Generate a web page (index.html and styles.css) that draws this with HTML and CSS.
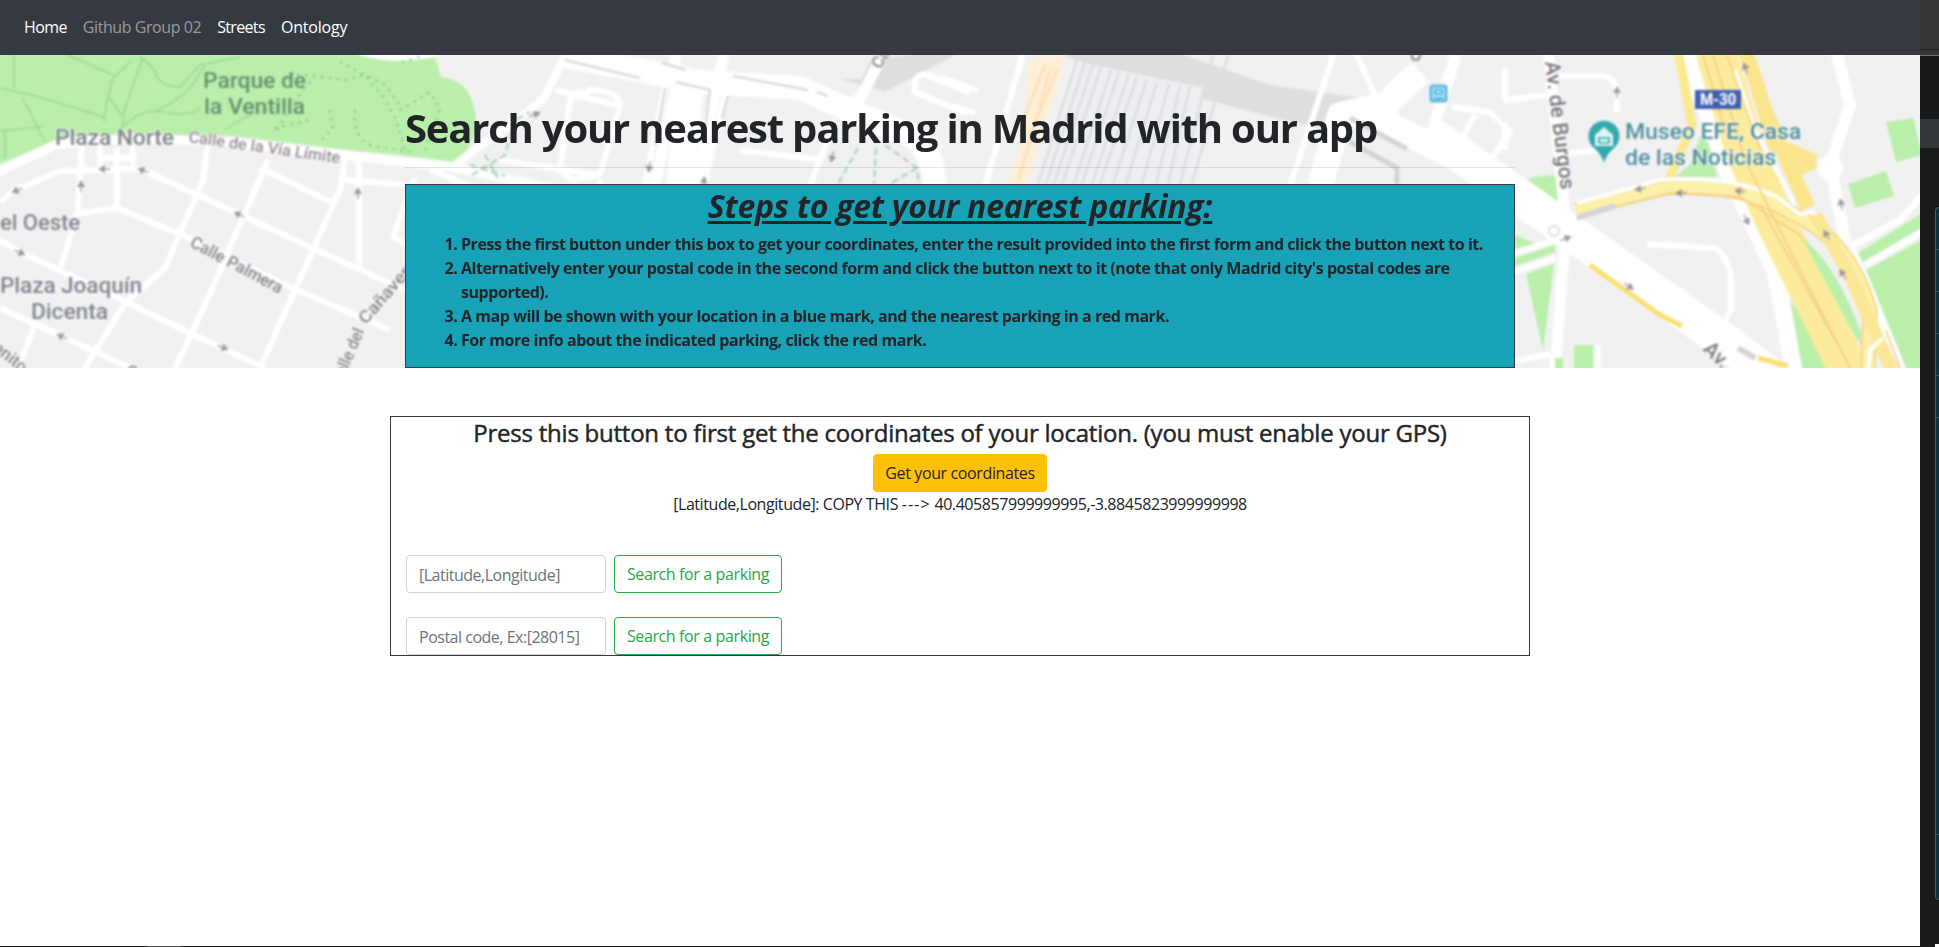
FILE: index.html
```html
<!DOCTYPE html>
<html lang="en">
<head>
<meta charset="utf-8">
<title>Parking in Madrid</title>
<link rel="stylesheet" href="styles.css">
</head>
<body>
<div class="screen">
<div class="page">
<nav class="navbar">
  <a class="nav-link home">Home</a>
  <a class="nav-link muted">Github Group 02</a>
  <a class="nav-link streets">Streets</a>
  <a class="nav-link ontology">Ontology</a>
</nav>
<header class="hero">
<svg class="map" viewBox="0 55 1920 313" preserveAspectRatio="none" aria-hidden="true">
  <defs>
    <g id="arrow" opacity=".8"><path d="M-7 0H2" stroke="#a9a7b2" stroke-width="2"/><path d="M-2 -4L5 0L-2 4Z" fill="#85838f"/></g>
  </defs>
  <g class="soft">
  <rect x="-5" y="50" width="1930" height="323" fill="#f1f1f1"/>
  <!-- park -->
  <path d="M-5 50H350Q375 62 400 61L435 57L441 77Q463 80 470 96Q478 114 475 132Q470 150 455 162Q430 158 340 149Q270 140 230 136L130 134L60 138L-5 166Z" fill="#b9efaa"/>
  <path d="M350 52Q385 66 436 57V50Z" fill="#fff"/>
  <g fill="none" stroke="#9fd69a" stroke-width="1.6">
    <path d="M14 55V88M22 97L45 142M0 88L40 97L104 117M0 131L43 127M5 130V158M68 55L113 75M130 62L113 78L107 102L104 122M143 58L133 85L125 108L122 130M110 98L122 116M140 57Q155 66 157 78Q170 90 181 86L200 65L240 57M122 128Q140 110 156 111Q178 100 190 88L205 66M156 111Q190 118 200 108M225 130Q250 110 290 105"/>
  </g>
  <g fill="none" stroke="#82bd82" stroke-width="2" stroke-dasharray="2 6">
    <path d="M297 74L345 80L365 75L385 99L396 120L405 150M310 82Q290 105 275 135M340 62L385 85L400 105M355 110Q352 145 380 147L410 152M275 128L310 120M330 110L333 128L320 142M402 62L425 55M400 110L430 92L440 110L425 150"/>
  </g>
  <!-- building shading -->
  <g fill="#dedede">
    <path d="M840 79H862L870 60L940 50H965L885 92Z"/>
    <path d="M1060 50H1170L1270 85L1340 95L1360 98L1330 130Q1230 110 1060 55Z"/>
  </g>
  <!-- station and tracks -->
  <path d="M1028 60L1068 50L1025 186H1008L1026 120Z" fill="#ffefd6"/>
  <path d="M1045 65L1025 115M1050 70L1018 182M1057 70L1030 135" stroke="#fde2bd" stroke-width="3" fill="none"/>
  <path d="M1080 62L1205 88L1188 186H1038Z" fill="#eeeff1"/>
  <g stroke="#dcdee3" stroke-width="2.6" fill="none">
    <path d="M1077 60L1038 184M1085 62L1046 184M1093 64L1054 184M1101 67L1062 184M1111 70L1074 184M1119 72L1082 184M1129 74L1092 184M1137 77L1100 184M1147 79L1113 184M1157 82L1126 184M1169 84L1142 184M1180 86L1156 184M1190 86L1168 184M1213 55L1180 184M1228 55L1192 184"/>
  </g>
  <!-- minor roads -->
  <g fill="none" stroke="#fff" stroke-width="6" stroke-linejoin="round">
    <path d="M0 202L15 190L60 171L140 169L200 196L310 247L405 290"/>
    <path d="M82 140L78 210L60 270M117 148V208L75 214M100 145V170M133 145V168M100 158H133"/>
    <path d="M117 208L180 234L290 287L390 330"/>
    <path d="M208 145L203 180L165 268L125 303L85 368M268 160L205 305L175 368"/>
    <path d="M260 168L333 203M345 160L340 190L260 368M359 160V270M345 180L405 185"/>
    <path d="M0 240L20 252L80 280L190 333L265 368M0 308L70 340L130 368M35 325L18 368"/>
    <path d="M415 178L393 237L410 247"/>
    <path d="M555 90L620 106M585 95Q578 88 570 100L560 170L572 180L600 175L620 105Q618 90 590 90L577 98M600 180V186"/>
    <path d="M665 85L645 186M725 90L705 184M740 150L820 160M835 120L810 186"/>
    <path d="M500 160L600 175M430 170L470 186"/>
    <path d="M940 77L978 91M940 103L975 113M1024 50L985 186"/>
    <path d="M1335 50L1290 186M1355 50L1375 95M1415 65L1395 95M1452 107L1490 112L1510 132L1487 165M1475 115L1455 150"/>
    <path d="M970 93L925 74Q912 75 915 92L965 113"/>
    <path d="M1505 68V100L1550 95M1550 76H1605Q1617 80 1617 92V112M1570 153L1600 150M1505 122V150"/>
    <path d="M1647 244L1715 248Q1728 255 1731 280V310L1720 328M1598 345V368"/>
  </g>
  <path d="M1515 184L1535 177L1555 175L1559 208ZM1515 235L1538 245L1515 255ZM1526 274L1554 264L1543 350ZM1515 258L1555 245V252L1515 266Z" fill="#b9efaa"/>
  <path d="M1510 362L1550 354M1510 254L1556 240M1510 273L1556 258" stroke="#fff" stroke-width="6"/>
  <!-- main white roads -->
  <g fill="none" stroke="#fff" stroke-linejoin="round">
    <path d="M-5 174L55 145L130 138L230 142L340 155L450 167L560 190" stroke-width="9"/>
    <path d="M568 50L543 100L455 165" stroke-width="8"/>
    <path d="M560 55L700 82L800 88L860 115L910 135Q935 150 935 190" stroke-width="24"/>
    <path d="M675 50V90L655 186M725 50L715 90L697 186M880 60L862 95L840 120" stroke-width="11"/>
    <path d="M690 85L680 186" stroke-width="28"/>
    <path d="M1420 72L1385 105L1340 115L1320 186M1370 115L1470 165L1540 215" stroke-width="26"/>
    <path d="M1456 55L1434 125" stroke-width="12"/>
    <path d="M1425 130L1570 232L1720 338L1770 375" stroke-width="36"/>
    <path d="M1548 50L1566 225L1555 373" stroke-width="11"/>
    <path d="M1685 50L1730 175L1775 270L1795 373" stroke-width="18"/>
    <path d="M1836 50L1850 105L1830 165L1845 240L1908 373" stroke-width="12"/>
  </g>
  <circle cx="1830" cy="168" r="13" fill="#fff"/>
  <g fill="none" stroke="#d4d4d4" stroke-width="2">
    <path d="M565 60L640 78M662 63L686 70M733 76L808 90M817 92L828 96M665 88L655 145M676 82L710 90L705 130M728 96L722 118"/>
    <path d="M1350 118L1407 149M1350 142L1397 168V184" stroke-width="5"/>
  </g>
  <g fill="#b9efaa">
    <path d="M1886 122L1913 118L1922 155L1896 162ZM1848 184L1886 171L1894 196L1855 208ZM1858 253L1925 211V227L1863 263ZM1866 270L1925 238V373H1908ZM1790 300L1840 373H1803ZM1574 345H1593V373H1574ZM1555 358H1563V373H1555Z"/>
  </g>
  <path d="M1850 247L1900 220L1922 195M1865 265L1925 230" fill="none" stroke="#fff" stroke-width="7"/>
  <!-- motorway -->
  <g fill="none" stroke-linejoin="round">
    <path d="M1678 50L1692 125L1668 182" stroke="#fbe98f" stroke-width="9"/>
    <path d="M1715 50L1745 150L1775 220L1850 373" stroke="#fdeb9c" stroke-width="40"/>
    <path d="M1745 50L1757 85L1775 145L1815 162M1765 110L1808 208M1785 175L1815 160" stroke="#fbe58c" stroke-width="15"/>
    <path d="M1576 210L1665 188Q1740 182 1795 215Q1850 240 1870 310L1868 373" stroke="#f4ce7c" stroke-width="15"/>
    <path d="M1576 210L1665 188Q1740 182 1795 215Q1850 240 1870 310L1868 373" stroke="#fdf0a8" stroke-width="12"/>
    <path d="M1815 215L1850 275L1893 373" stroke="#fbe896" stroke-width="13"/>
    <path d="M1590 265L1660 315L1682 326M1758 358L1788 366" stroke="#f9e070" stroke-width="5"/>
    <path d="M1577 203L1660 180Q1730 175 1777 197L1800 214L1815 212M1735 70L1755 130L1795 205M1868 373L1870 350L1883 338" stroke="#fff" stroke-width="4"/>
    <path d="M1713 55L1745 160L1800 270L1850 368M1727 55L1760 150M1703 55L1725 130M1760 205L1835 340M1577 216L1670 193L1740 197L1800 235L1840 290L1862 345M1886 330L1900 368" stroke="#f3cf85" stroke-width="1.8"/>
    <path d="M1577 218L1615 206M1755 358L1738 348" stroke="#d5d2d9" stroke-width="6"/>
  </g>
  <path d="M1802 238Q1835 262 1862 335L1858 342Z" fill="#b9efaa"/>
  <path d="M1700 136L1709 144L1717 177H1675L1690 165Z" fill="#b9efaa"/>
  <circle cx="1554" cy="231" r="5" fill="none" stroke="#ddd" stroke-width="2"/>
  <!-- footpaths -->
  <g fill="none" stroke="#a5cfb1" stroke-width="2" stroke-dasharray="7 4"><path d="M858 148L838 184M876 148L874 184M885 145L917 168L919 184M917 168L890 184M470 165L505 176M472 175L505 155L515 120L530 112M485 155L498 178"/></g>
  <!-- direction arrows -->
  <use href="#arrow" transform="translate(16 191) rotate(155)"/><use href="#arrow" transform="translate(103 169) rotate(180)"/><use href="#arrow" transform="translate(142 170) rotate(200)"/><use href="#arrow" transform="translate(81 185) rotate(-90)"/><use href="#arrow" transform="translate(21 253) rotate(25)"/><use href="#arrow" transform="translate(238 214) rotate(205)"/><use href="#arrow" transform="translate(358 192) rotate(-90)"/><use href="#arrow" transform="translate(61 336) rotate(205)"/><use href="#arrow" transform="translate(224 348) rotate(20)"/>
  <use href="#arrow" transform="translate(536 114) rotate(-20)"/><use href="#arrow" transform="translate(649 168) rotate(100)"/><use href="#arrow" transform="translate(832 158) rotate(105)"/><use href="#arrow" transform="translate(704 181) rotate(-80)"/>
  <use href="#arrow" transform="translate(1617 91) rotate(-90)"/><use href="#arrow" transform="translate(1639 189) rotate(172)"/><use href="#arrow" transform="translate(1680 193) rotate(177)"/><use href="#arrow" transform="translate(1739 191) rotate(187)"/><use href="#arrow" transform="translate(1745 67) rotate(-110)"/><use href="#arrow" transform="translate(1747 221) rotate(65)"/><use href="#arrow" transform="translate(1841 203) rotate(-100)"/><use href="#arrow" transform="translate(1826 234) rotate(-120)"/><use href="#arrow" transform="translate(1842 273) rotate(-120)"/><use href="#arrow" transform="translate(1567 238) rotate(-20)"/><use href="#arrow" transform="translate(1630 287) rotate(35)"/>
  <!-- labels -->
  <g class="label park">
    <text x="203" y="88" textLength="103" lengthAdjust="spacingAndGlyphs">Parque de</text><text x="204" y="114" textLength="101" lengthAdjust="spacingAndGlyphs">la Ventilla</text>
  </g>
  <g class="label place">
    <text x="55" y="145" textLength="119" lengthAdjust="spacingAndGlyphs">Plaza Norte</text><text x="0" y="230" textLength="80" lengthAdjust="spacingAndGlyphs">el Oeste</text><text x="0" y="293" textLength="142" lengthAdjust="spacingAndGlyphs">Plaza Joaquín</text><text x="31" y="319" textLength="77" lengthAdjust="spacingAndGlyphs">Dicenta</text>
  </g>
  <g class="label street">
    <text class="mauve" transform="translate(188 142) rotate(8)" textLength="153" lengthAdjust="spacingAndGlyphs">Calle de la Vía Límite</text>
    <text transform="translate(189 246) rotate(28)" textLength="102" lengthAdjust="spacingAndGlyphs">Calle Palmera</text>
    <text transform="translate(345 377) rotate(-67)" textLength="50" lengthAdjust="spacingAndGlyphs">alle del</text>
    <text transform="translate(366 325) rotate(-49)" textLength="84" lengthAdjust="spacingAndGlyphs">Cañaveral</text>
    <text transform="translate(-8 350) rotate(38)">enito</text>
    <text transform="translate(124 374) rotate(30)">C</text>
    <text transform="translate(880 70) rotate(-58)">Ca</text>
    <text transform="translate(1410 61)">O</text>
  </g>
  <g class="label street big">
    <text transform="translate(1545 62) rotate(83)" textLength="129" lengthAdjust="spacingAndGlyphs">Av. de Burgos</text>
    <text transform="translate(1702 350) rotate(44)">Av.</text>
  </g>
  <g class="label museum"><text x="1625" y="139" textLength="176" lengthAdjust="spacingAndGlyphs">Museo EFE, Casa</text><text x="1625" y="165" textLength="151" lengthAdjust="spacingAndGlyphs">de las Noticias</text></g>
  <path d="M1604 163Q1602 155 1594 148A15.500 15.500 0 1 1 1614 148Q1606 155 1604 163Z" fill="#35a9ac"/>
  <path d="M1595 135L1604 127L1613 135V146H1595Z" fill="#dff4f4"/><path d="M1599 138H1609V143H1599Z" fill="none" stroke="#35a9ac" stroke-width="1.6"/>
  <rect x="1695" y="90" width="46" height="19" fill="#3f5fb4"/><text class="badge" x="1700" y="105" textLength="36" lengthAdjust="spacingAndGlyphs">M-30</text>
  <rect x="1431" y="86" width="15" height="15" rx="2" fill="#c5eafa" stroke="#5ab8dc" stroke-width="3"/><path d="M1435 90H1442V94H1435ZM1434 98H1443" stroke="#4db3d9" stroke-width="2" fill="#d5f0fb"/>
  </g>
</svg>
<div class="hero-body">
  <h1>Search your nearest parking in Madrid with our app</h1>
  <hr>
  <section class="steps">
    <h2>Steps to get your nearest parking:</h2>
    <ol>
      <li>Press the first button under this box to get your coordinates, enter the result provided into the first form and click the button next to it.</li>
      <li>Alternatively enter your postal code in the second form and click the button next to it (note that only Madrid city's postal codes are<br>supported).</li>
      <li>A map will be shown with your location in a blue mark, and the nearest parking in a red mark.</li>
      <li>For more info about the indicated parking, click the red mark.</li>
    </ol>
  </section>
</div>
</header>
<main class="finder">
  <h4>Press this button to first get the coordinates of your location. (you must enable your GPS)</h4>
  <div class="center"><button type="button" class="btn warning">Get your coordinates</button></div>
  <p class="coords">[Latitude,Longitude]: COPY THIS <span class="dashes">---&gt;</span> 40.405857999999995,-3.8845823999999998</p>
  <form class="row"><input class="input" placeholder="[Latitude,Longitude]"><button type="button" class="btn success">Search for a parking</button></form>
  <form class="row"><input class="input" placeholder="Postal code, Ex:[28015]"><button type="button" class="btn success">Search for a parking</button></form>
</main>
<footer class="taskbar"><div class="task"></div></footer>
</div>
<aside class="edge">
  <div class="edge-head"></div>
  <div class="edge-sub"></div>
  <div class="edge-gap"></div>
  <div class="edge-band"></div>
  <div class="edge-panel">
    <i></i><i></i><i></i><i></i><i></i><i class="last"></i>
  </div>
  <div class="edge-foot"></div>
</aside>
</div>
</body>
</html>
```
FILE: styles.css
```css
*{box-sizing:border-box}
body{margin:0;font:16px/24px "Open Sans","Noto Sans",sans-serif;color:#212529;background:#fff}
.screen{display:flex;height:947px;overflow:hidden}
.page{width:1920px;flex:none;display:flex;flex-direction:column}

.navbar{height:55px;flex:none;background:#343a40;display:flex;align-items:center;padding:0 16px 1px}
.nav-link{padding:0 8px;color:#fff;letter-spacing:-.43px}
.muted{color:#999b9e}
.home{letter-spacing:-.6px}
.streets{letter-spacing:-.66px}
.ontology{letter-spacing:-.2px}

.hero{height:313px;flex:none;display:grid;overflow:hidden}
.map{grid-area:1/1;width:1920px;height:313px;display:block}
.soft{filter:blur(.8px)}
.label{font-family:Roboto,sans-serif;font-size:22px;font-weight:500;stroke:#fff;stroke-opacity:.7;stroke-width:2px;paint-order:stroke}
.park{fill:#5d946c;stroke:#c9f2be}
.place{fill:#7f858f}
.street{fill:#85858a;font-size:17px}
.mauve{fill:#998f9c;font-size:16px}
.big{fill:#77777c;font-size:21px}
.museum{fill:#4f8f9f}
.badge{font:700 16px Roboto,sans-serif;fill:#fff}

.hero-body{grid-area:1/1;width:1110px;margin:0 auto;padding-top:48px;z-index:1}
h1,h2,h4,p,ol{margin:0}
h1{font-size:40px;line-height:48px;height:48px;padding-top:1px;font-weight:700;letter-spacing:-1.2px;white-space:nowrap}
hr{margin:16px 0;border:0;border-top:1px solid rgba(0,0,0,.1)}
.steps{height:184px;background:#17a2b8;border:1px solid #343a40;font-weight:700}
h2{font-size:32px;line-height:38px;padding-top:2px;font-style:italic;text-decoration:underline;text-decoration-thickness:3px;text-underline-offset:3px;text-align:center;margin-bottom:7px;letter-spacing:-.24px}
ol{padding-left:55px;letter-spacing:-.45px;white-space:nowrap}

.finder{width:1140px;height:240px;flex:none;margin:48px auto 0;border:1px solid #343a40;padding:0 15px}
h4{font-size:24px;line-height:29px;padding-top:1px;font-weight:500;-webkit-text-stroke:.45px #212529;text-align:center;margin-bottom:7px;letter-spacing:-.235px}
.center{display:flex;justify-content:center}
.btn{font:inherit;letter-spacing:-.38px;height:38px;padding:0;white-space:nowrap;border:1px solid;border-radius:4px;background:#fff}
.success{color:#28a745;border-color:#28a745;width:168px}
.warning{background:#ffc107;border-color:#ffc107;color:#212529;width:174px}
.coords{text-align:center;letter-spacing:-.43px;margin-bottom:39px}
.dashes{letter-spacing:1.1px}
.row{display:flex;gap:8px;margin-bottom:24px}
.input{width:200px;height:38px;padding:2px 12px 0;border:1px solid #ced4da;border-radius:4px;font:inherit;letter-spacing:-.49px}
.input::placeholder{color:#6c757d;opacity:1}

.taskbar{margin-top:auto;height:1px;background:#1c1c1e;padding-left:147px}
.task{width:34px;height:1px;background:#4a4a4c}

.edge{width:19px;flex:none;background:#1a1b1c;display:flex;flex-direction:column}
.edge-head{height:50px;background:#363638;border-bottom:1px solid #222}
.edge-sub{height:6px;background:#333536;border-bottom:1px solid #77706a}
.edge-gap{height:63px;background:#17181a}
.edge-band{height:29px;background:#343739}
.edge-panel{margin:59px 0 0 15px;height:693px;background:#10303c;border:1px solid #505659;border-right:0;border-radius:5px 0 0 5px;display:flex;flex-direction:column}
.edge-panel i{height:42px;flex:none;border-bottom:1px solid #33515c}
.edge-panel .last{height:417px}
.edge-foot{margin:44px 0 0 15px;height:3px;background:#fff}
```
